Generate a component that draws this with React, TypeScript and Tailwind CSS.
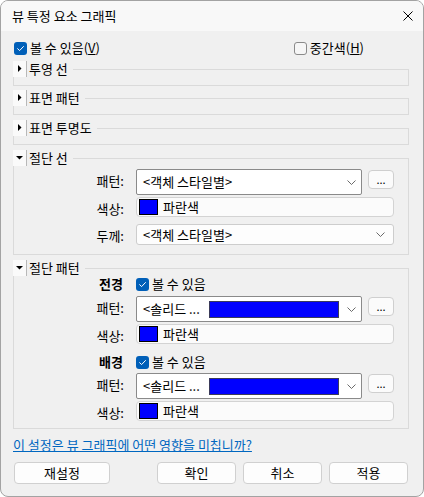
import type { ReactNode } from 'react'

function CheckBox({ checked }: { checked: boolean }) {
  if (checked) {
    return (
      <span className="flex h-[13px] w-[13px] items-center justify-center rounded-[3px] bg-[#005fb8]">
        <svg viewBox="0 0 10 10" className="h-[9px] w-[9px]" fill="none">
          <path d="M1.8 5.2L4 7.3L8.3 2.8" stroke="white" strokeWidth="1.1" strokeLinecap="round" strokeLinejoin="round" />
        </svg>
      </span>
    )
  }
  return <span className="block h-[13px] w-[13px] rounded-[3px] border border-[#8a8a8a] bg-[#f6f6f6]" />
}

function Toggle({ open }: { open: boolean }) {
  return (
    <span className="flex h-[16px] w-[14px] items-center justify-center border-r border-[#b8b8b8] bg-[#fafafa]">
      {open ? (
        <svg viewBox="0 0 8 4" className="h-[4px] w-[8px]">
          <path d="M0 0H7L3.5 3.5Z" fill="black" />
        </svg>
      ) : (
        <svg viewBox="0 0 4 8" className="h-[8px] w-[4px]">
          <path d="M0 0V7L3.5 3.5Z" fill="black" />
        </svg>
      )}
    </span>
  )
}

function Chevron() {
  return (
    <svg viewBox="0 0 9 5" className="h-[5px] w-[9px] shrink-0" fill="none">
      <path d="M0.5 0.5L4.5 4.5L8.5 0.5" stroke="#5a5a5a" strokeWidth="0.9" />
    </svg>
  )
}

function Group({ title, open, children }: { title: string; open: boolean; children?: ReactNode }) {
  return (
    <div className={open ? 'ml-[12px] mr-[14px] border border-[#dadada]' : 'ml-[12px] mr-[14px] h-[17px] border border-[#dadada]'}>
      <div className="-ml-px -mt-[9px] flex h-[16px] w-fit items-center bg-[#f0f0f0] pr-[5px]">
        <Toggle open={open} />
        <span className="ml-[2px] leading-[16px]">{title}</span>
      </div>
      {children}
    </div>
  )
}

function Row({ label, bold, className, children }: { label: string; bold?: boolean; className?: string; children: ReactNode }) {
  return (
    <div className={`flex items-start ${className ?? ''}`}>
      <div className={bold ? 'w-[109px] text-right font-bold leading-[16px]' : 'mt-[4px] w-[110px] text-right leading-[16px]'}>{label}</div>
      <div className={bold ? 'ml-[13px] w-[258px]' : 'ml-[12px] w-[258px]'}>{children}</div>
    </div>
  )
}

function PatternSelect({ text, bar, light }: { text: string; bar?: boolean; light?: boolean }) {
  return (
    <div className="flex items-start">
      <div
        className={
          light
            ? 'flex h-[21px] flex-1 items-center rounded-[3px] border border-[#cdcdcd] bg-[#fdfdfd] pl-[6px] pr-[8px]'
            : 'flex h-[26px] w-[226px] items-center rounded-[2px] border border-[#8a8a8a] bg-white pl-[6px] pr-[5px]'
        }
      >
        <span className="leading-[16px] whitespace-nowrap">{text}</span>
        {bar ? (
          <span className="ml-auto mr-[8px] h-[17px] w-[130px] border border-[#3a3a5a] bg-[#0000ff]" />
        ) : (
          <span className="flex-1" />
        )}
        <Chevron />
      </div>
      {!light && (
        <div className="ml-[6px] mt-[1px] flex h-[19px] w-[26px] items-center justify-center rounded-[4px] border border-[#cfcfcf] bg-[#fbfbfb] text-[11px] leading-[11px]">
          ...
        </div>
      )}
    </div>
  )
}

function ColorField() {
  return (
    <div className="flex h-[20px] items-center rounded-[4px] border border-[#d3d3d3] bg-[#fbfbfb] pl-[2px]">
      <span className="h-[16px] w-[19px] border border-black bg-[#0000ff]" />
      <span className="ml-[5px] leading-[16px]">파란색</span>
    </div>
  )
}

function Button({ label, wide }: { label: string; wide?: boolean }) {
  return (
    <div
      className={`flex h-[22px] items-center justify-center rounded-[4px] border border-[#d0d0d0] bg-[#fdfdfd] leading-[16px] ${wide ? 'w-[96px]' : 'w-[79px]'}`}
    >
      {label}
    </div>
  )
}

export default function App() {
  return (
    <div className="h-[497px] w-[424px] bg-white">
      <div className="flex h-full flex-col overflow-hidden rounded-[8px] border border-[#a3a3a3] bg-[#f0f0f0] font-['Noto_Sans_CJK_KR','Noto_Sans',sans-serif] text-[13px] text-black">
        {/* Title bar */}
        <div className="flex h-[30px] shrink-0 items-center bg-[#f8f8f8] pl-[11px] pr-[10px]">
          <span className="leading-[16px]">뷰 특정 요소 그래픽</span>
          <svg viewBox="0 0 10 10" className="ml-auto h-[10px] w-[10px]" fill="none">
            <path d="M0.5 0.5L9.5 9.5M9.5 0.5L0.5 9.5" stroke="black" strokeWidth="1" />
          </svg>
        </div>

        {/* Visibility row */}
        <div className="mt-[9px] flex h-[16px] items-center">
          <div className="ml-[13px] flex items-center">
            <CheckBox checked />
            <span className="ml-[3px] leading-[16px]">
              볼 수 있음(<u>V</u>)
            </span>
          </div>
          <div className="ml-auto mr-[59px] flex items-center">
            <CheckBox checked={false} />
            <span className="ml-[3px] leading-[16px]">
              중간색(<u>H</u>)
            </span>
          </div>
        </div>

        <div className="mt-[13px]">
          <Group title="투영 선" open={false} />
        </div>
        <div className="mt-[12px]">
          <Group title="표면 패턴" open={false} />
        </div>
        <div className="mt-[13px]">
          <Group title="표면 투명도" open={false} />
        </div>

        <div className="mt-[13px]">
          <Group title="절단 선" open>
            <div className="pb-[9px]">
              <Row label="패턴:" className="mt-[3px]">
                <PatternSelect text="<객체 스타일별>" />
              </Row>
              <Row label="색상:" className="mt-[2px]">
                <ColorField />
              </Row>
              <Row label="두께:" className="mt-[7px]">
                <PatternSelect text="<객체 스타일별>" light />
              </Row>
            </div>
          </Group>
        </div>

        <div className="mt-[13px]">
          <Group title="절단 패턴" open>
            <div className="pb-[7px]">
              <Row label="전경" bold>
                <div className="flex h-[16px] items-center">
                  <CheckBox checked />
                  <span className="ml-[3px] leading-[16px]">볼 수 있음</span>
                </div>
              </Row>
              <Row label="패턴:" className="mt-[4px]">
                <PatternSelect text="<솔리드 ..." bar />
              </Row>
              <Row label="색상:" className="mt-[2px]">
                <ColorField />
              </Row>
              <Row label="배경" bold className="mt-[10px]">
                <div className="flex h-[16px] items-center">
                  <CheckBox checked />
                  <span className="ml-[3px] leading-[16px]">볼 수 있음</span>
                </div>
              </Row>
              <Row label="패턴:" className="mt-[3px]">
                <PatternSelect text="<솔리드 ..." bar />
              </Row>
              <Row label="색상:" className="mt-[2px]">
                <ColorField />
              </Row>
            </div>
          </Group>
        </div>

        <div className="ml-[12px] mt-[8px] leading-[16px] text-[#0067c0] underline">
          이 설정은 뷰 그래픽에 어떤 영향을 미칩니까?
        </div>

        <div className="mt-[9px] flex items-center pl-[13px] pr-[15px]">
          <Button label="재설정" wide />
          <div className="ml-auto flex gap-[7px]">
            <Button label="확인" />
            <Button label="취소" />
            <Button label="적용" />
          </div>
        </div>
      </div>
    </div>
  )
}
